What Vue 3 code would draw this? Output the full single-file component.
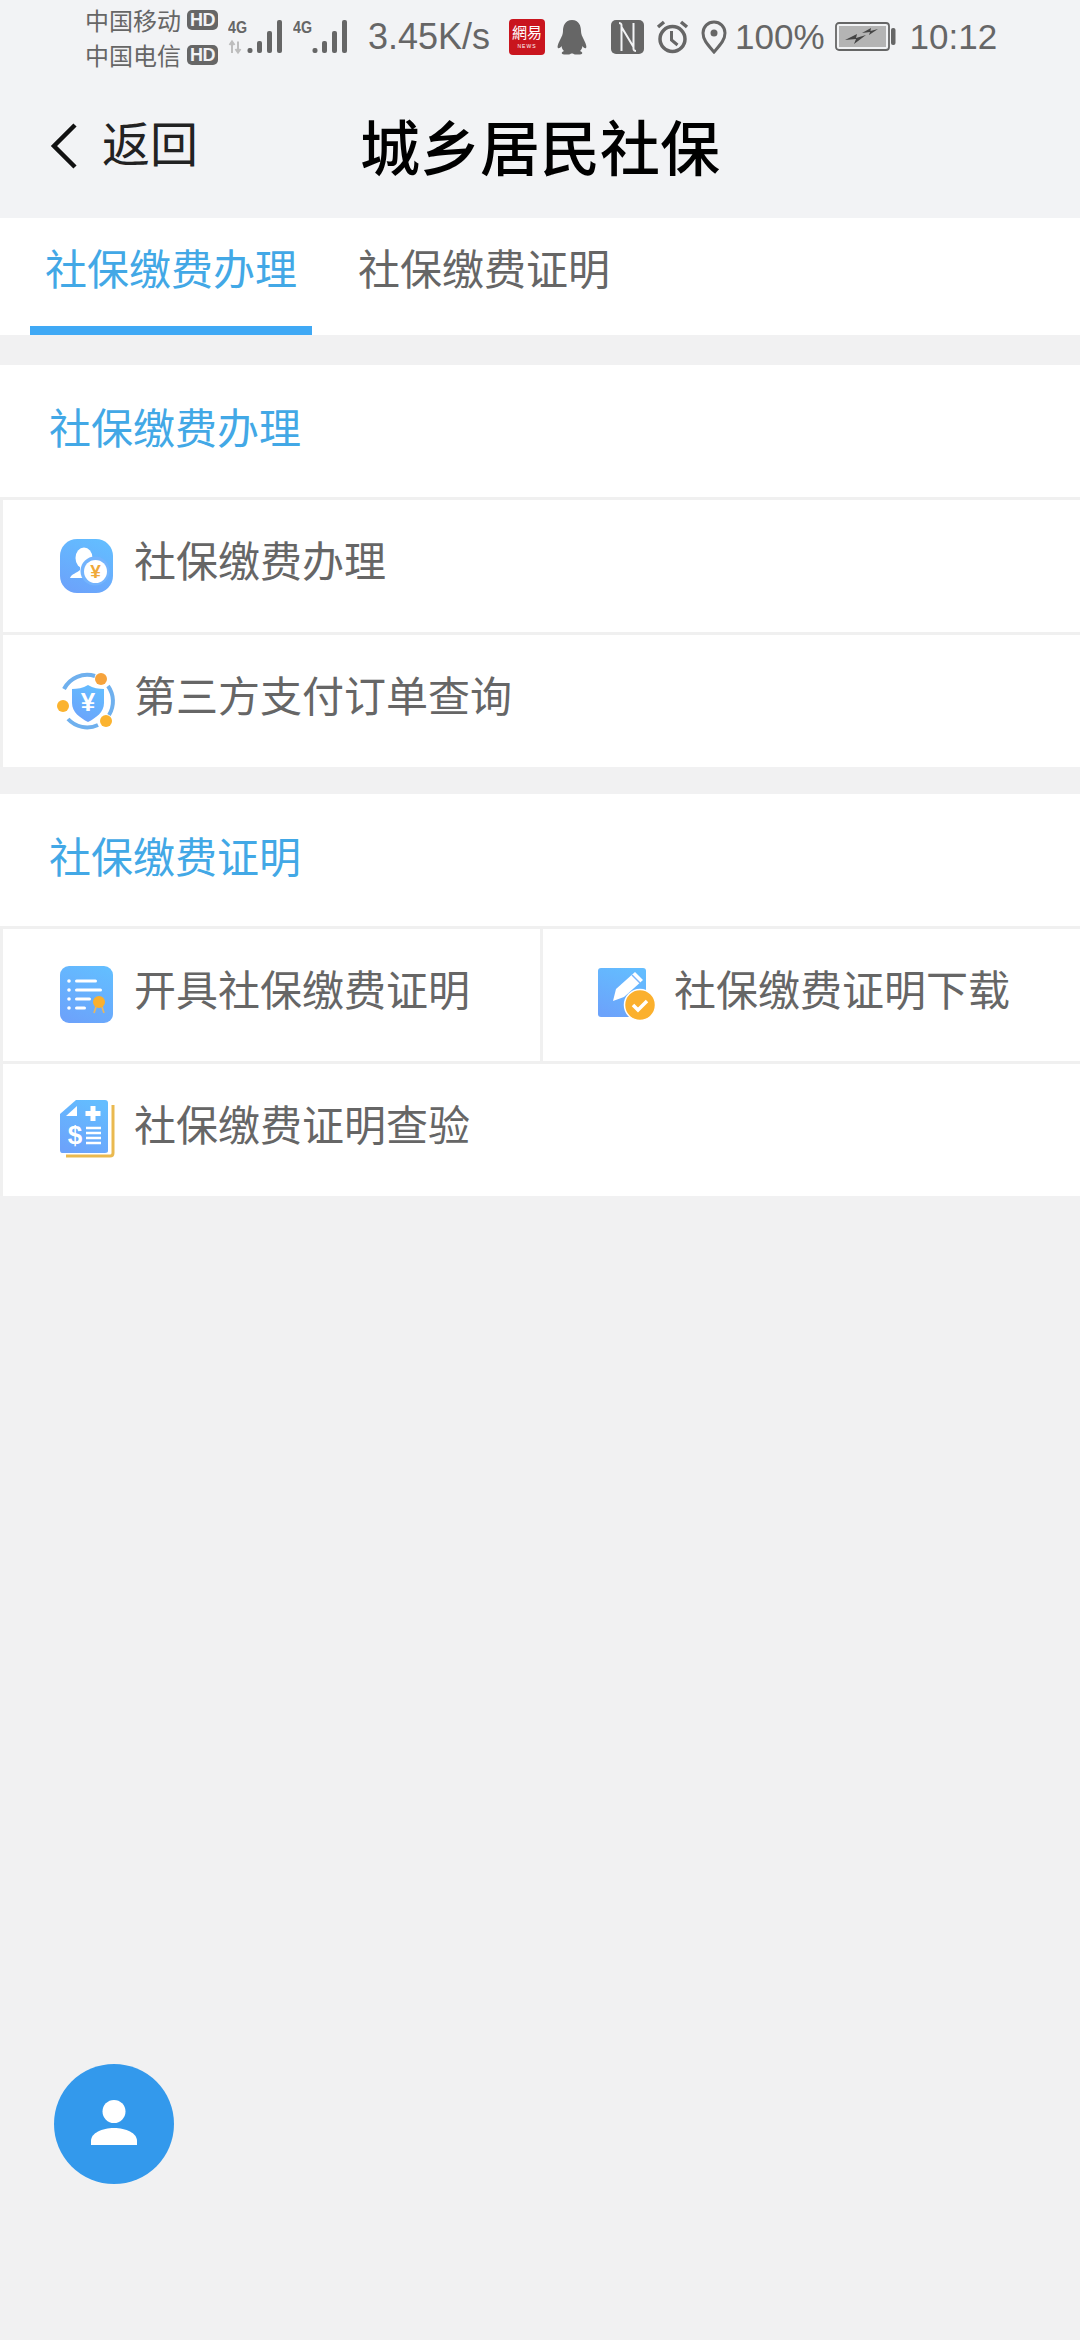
<script setup>
const sections = [
  {
    title: '社保缴费办理',
    rows: [
      [{ icon: 'person', label: '社保缴费办理' }],
      [{ icon: 'shield', label: '第三方支付订单查询' }],
    ],
  },
  {
    title: '社保缴费证明',
    rows: [
      [
        { icon: 'cert', label: '开具社保缴费证明' },
        { icon: 'pencil', label: '社保缴费证明下载' },
      ],
      [{ icon: 'doc', label: '社保缴费证明查验' }],
    ],
  },
]
</script>

<template>
  <div class="page">
    <div class="top">
      <div class="status">
        <div class="carriers">
          <div class="carrier">中国移动<span class="hd">HD</span></div>
          <div class="carrier">中国电信<span class="hd">HD</span></div>
        </div>
        <svg class="signal" width="55" height="36" viewBox="0 0 55 36">
          <text x="0" y="14" class="net" textLength="19" lengthAdjust="spacingAndGlyphs">4G</text>
          <path d="M4 34V23M1.500 26L4 22.500L6.500 26M10 22.500V33.500M7.500 30L10 33.500L12.500 30" stroke="#bdbdbd" stroke-width="2" fill="none" />
          <rect x="19.500" y="29" width="5" height="5" rx="2" fill="#666" />
          <rect x="29" y="22" width="5" height="12" rx="2" fill="#666" />
          <rect x="39" y="12" width="5" height="22" rx="2" fill="#666" />
          <rect x="49" y="1" width="5" height="33" rx="2" fill="#666" />
        </svg>
        <svg class="signal second" width="55" height="36" viewBox="0 0 55 36">
          <text x="0" y="14" class="net" textLength="19" lengthAdjust="spacingAndGlyphs">4G</text>
          <rect x="19.500" y="29" width="5" height="5" rx="2" fill="#666" />
          <rect x="29" y="22" width="5" height="12" rx="2" fill="#666" />
          <rect x="39" y="12" width="5" height="22" rx="2" fill="#666" />
          <rect x="49" y="1" width="5" height="33" rx="2" fill="#666" />
        </svg>
        <span class="speed">3.45K/s</span>
        <div class="news">
          <span class="news-cn">網易</span>
          <span class="news-en">NEWS</span>
        </div>
        <svg class="qq" width="30" height="36" viewBox="0 0 30 36">
          <path d="M15 1C8 1 6 7 6 12C6 15 5 17 3 21C1 25 0 28 1 29C2 30 4 28 4.500 27C5 30 6 31 7 32C4 33 4 35 7 35.500H12C13.500 35 14 34.500 15 34.500C16 34.500 16.500 35 18 35.500H23C26 35 26 33 23 32C24 31 25 30 25.500 27C26 28 28 30 29 29C30 28 29 25 27 21C25 17 24 15 24 12C24 7 22 1 15 1Z" fill="#666" />
        </svg>
        <svg class="nfc" width="33" height="34" viewBox="0 0 33 34">
          <rect x="0" y="0" width="33" height="34" rx="5" fill="#666" />
          <path d="M8 3C11 3 10.500 5 10.500 8V31M25 31C22 31 22.500 29 22.500 26V3M10.500 7L22.500 27" stroke="#f2f3f5" stroke-width="2" fill="none" />
        </svg>
        <svg class="alarm" width="33" height="34" viewBox="0 0 33 34">
          <circle cx="16.500" cy="19" r="12.500" stroke="#666" stroke-width="3.500" fill="none" />
          <path d="M15.500 11V20L21.500 25" stroke="#666" stroke-width="3" fill="none" />
          <path d="M2 7L8 2M31 7L25 2" stroke="#666" stroke-width="3.500" fill="none" />
        </svg>
        <svg class="pin" width="26" height="34" viewBox="0 0 26 34">
          <path d="M13 32C7 25 2 20 2 13C2 6.500 7 2 13 2C19 2 24 6.500 24 13C24 20 19 25 13 32Z" stroke="#666" stroke-width="3" fill="none" />
          <circle cx="13" cy="13" r="3.500" fill="#666" />
        </svg>
        <span class="percent">100%</span>
        <svg class="battery" width="61" height="30" viewBox="0 0 61 30">
          <rect x="1" y="1" width="53" height="27" rx="3" fill="#f2f3f5" stroke="#666" stroke-width="1.800" />
          <rect x="4" y="4" width="47" height="21" fill="#b4b4b4" />
          <rect x="56" y="6" width="4.500" height="17" rx="2" fill="#666" />
          <path d="M10 18L22 12L21 16L31 13L19 22L21 17ZM27 11L36 6L35.500 9L43 7L34 13L35 10Z" fill="#444" />
        </svg>
        <span class="clock">10:12</span>
      </div>
      <div class="nav">
        <div class="back">
          <svg width="30" height="48" viewBox="0 0 30 48">
            <path d="M26 3L5 24L26 45" stroke="#111" stroke-width="4.500" fill="none" />
          </svg>
          <span>返回</span>
        </div>
        <div class="title">城乡居民社保</div>
        <div></div>
      </div>
    </div>

    <div class="tabs">
      <div class="tab active">社保缴费办理</div>
      <div class="tab">社保缴费证明</div>
    </div>

    <div v-for="section in sections" :key="section.title" class="section">
      <div class="section-title"><span>{{ section.title }}</span></div>
      <div class="grid">
        <div v-for="(row, i) in section.rows" :key="i" class="row">
          <div v-for="item in row" :key="item.label" class="cell">
            <svg class="icon" width="60" height="60" viewBox="0 0 60 60">
              <defs>
                <linearGradient :id="'g-' + item.icon" x1="0.700" y1="0" x2="0.300" y2="1">
                  <stop offset="0" stop-color="#63bdff" />
                  <stop offset="1" stop-color="#6ca3fb" />
                </linearGradient>
              </defs>
              <template v-if="item.icon === 'person'">
                <rect x="3" y="3" width="53" height="54" rx="17" :fill="'url(#g-person)'" />
                <ellipse cx="27" cy="22" rx="8.500" ry="10.500" fill="#fff" />
                <path d="M13 42C14 38 20 37 23 34V28H32V42Z" fill="#fff" />
                <circle cx="38" cy="35" r="14.500" fill="#74b4fd" />
                <circle cx="38.500" cy="35.500" r="11.500" fill="#fff" />
                <text x="38.500" y="42" class="yen orange">¥</text>
              </template>
              <template v-else-if="item.icon === 'shield'">
                <path d="M7 18A26 26 0 0 1 38 5M51 15A26 26 0 0 1 52 44M41 54A26 26 0 0 1 11 48" stroke="#6fb0ee" stroke-width="4" fill="none" />
                <path d="M31 14C36 17 42 18 47 18V32C47 41 39 47 31 51C23 47 15 41 15 32V18C20 18 26 17 31 14Z" :fill="'url(#g-shield)'" />
                <text x="31" y="40" class="yen white">¥</text>
                <circle cx="44" cy="8" r="6" fill="#f6a33c" />
                <circle cx="6" cy="35" r="6" fill="#fbb32f" />
                <circle cx="49" cy="50" r="6" fill="#fbb32f" />
              </template>
              <template v-else-if="item.icon === 'cert'">
                <rect x="3" y="1" width="53" height="57" rx="9" :fill="'url(#g-cert)'" />
                <g fill="#fff">
                  <circle cx="12" cy="16" r="1.800" />
                  <rect x="18" y="14.500" width="22" height="3" rx="1.500" />
                  <circle cx="12" cy="25" r="1.800" />
                  <rect x="18" y="23.500" width="27" height="3" rx="1.500" />
                  <circle cx="12" cy="34" r="1.800" />
                  <rect x="18" y="32.500" width="16" height="3" rx="1.500" />
                  <circle cx="12" cy="43" r="1.800" />
                  <rect x="18" y="41.500" width="11" height="3" rx="1.500" />
                </g>
                <path d="M39 42L37 48M45 42L47 48" stroke="#e3b765" stroke-width="1.800" />
                <circle cx="42" cy="37" r="6" fill="#fbb02d" />
              </template>
              <template v-else-if="item.icon === 'pencil'">
                <rect x="1" y="3" width="48" height="49" rx="3" :fill="'url(#g-pencil)'" />
                <path d="M16 36L19 24L38 7L46 15L27 32Z" fill="#fff" />
                <path d="M35 10L43 18" stroke="#7ab4fb" stroke-width="1.500" />
                <circle cx="43" cy="40" r="15.500" fill="#fbb02d" stroke="#fff" stroke-width="1.500" />
                <path d="M36 40L41 45L50 36" stroke="#fff" stroke-width="3.500" fill="none" />
              </template>
              <template v-else>
                <path d="M9 56H53C55 56 56 55 56 53V5" stroke="#eab94f" stroke-width="3" fill="none" />
                <path d="M19 0H48C50 0 51 1 51 3V51C51 52 50 53 48 53H5C4 53 3 52 3 50V14Z" :fill="'url(#g-doc)'" />
                <path d="M9 16L20 6V16Z" fill="#fff" />
                <path d="M33.500 6H38.500V11H43.500V16H38.500V21H33.500V16H28.500V11H33.500Z" fill="#fff" />
                <text x="18" y="44" class="dollar">$</text>
                <path d="M29 28H44M29 33H44M29 38H44M29 43H44" stroke="#fff" stroke-width="2.500" />
              </template>
            </svg>
            <span class="label">{{ item.label }}</span>
          </div>
        </div>
      </div>
    </div>

    <div class="fab">
      <svg width="60" height="60" viewBox="0 0 60 60">
        <circle cx="30" cy="17.500" r="11.500" fill="#fff" />
        <path d="M7 51V47C7 39 18 34 30 34C42 34 53 39 53 47V51Z" fill="#fff" />
      </svg>
    </div>
  </div>
</template>

<style scoped>
.page {
  position: relative;
  height: 2340px;
  overflow: hidden;
  background: #f1f1f2;
  font-family: "Noto Sans CJK SC", "Liberation Sans", sans-serif;
}

.top {
  height: 218px;
  background: #f2f3f5;
}

.status {
  display: flex;
  align-items: center;
  height: 74px;
  padding-left: 85px;
  color: #666;
}

.carriers {
  width: 143px;
}

.carrier {
  display: flex;
  align-items: center;
  height: 35px;
  font-size: 24px;
  line-height: 35px;
}

.hd {
  margin-left: 6px;
  width: 31px;
  height: 20px;
  border-radius: 5px;
  background: #666;
  color: #f2f3f5;
  font: bold 18px/20px "Liberation Sans", sans-serif;
  letter-spacing: -0.500px;
  text-align: center;
}

.signal {
  flex: none;
}

.second {
  margin-left: 10px;
}

.net {
  font: bold 17px "Liberation Sans", sans-serif;
  fill: #666;
}

.speed,
.percent,
.clock {
  font: 35px/40px "Liberation Sans", sans-serif;
  white-space: nowrap;
}

.speed {
  margin-left: 20px;
  width: 121px;
  font-size: 36px;
}

.news {
  display: flex;
  flex-direction: column;
  align-items: center;
  width: 36px;
  height: 36px;
  margin-left: 20px;
  border-radius: 4px;
  background: #c9151e;
  color: #fff;
}

.news-cn {
  margin-top: 4px;
  font-size: 15px;
  line-height: 17px;
  white-space: nowrap;
}

.news-en {
  margin-top: 3px;
  font: 5px/6px "Liberation Sans", sans-serif;
  letter-spacing: 1px;
}

.qq {
  margin-left: 12px;
}

.nfc {
  margin-left: 24px;
}

.alarm {
  margin-left: 12px;
}

.pin {
  margin-left: 12px;
}

.percent {
  margin-left: 8px;
}

.battery {
  margin-left: 10px;
}

.clock {
  margin-left: 14px;
}

.nav {
  display: grid;
  grid-template-columns: 1fr auto 1fr;
  align-items: center;
  height: 144px;
}

.back {
  display: flex;
  align-items: center;
  gap: 23px;
  padding-left: 49px;
  font-size: 48px;
  color: #222;
}

.back span {
  padding-bottom: 10px;
}

.title {
  padding-bottom: 4px;
  font-size: 60px;
  font-weight: 500;
  color: #000;
}

.tabs {
  display: flex;
  height: 117px;
  padding-left: 30px;
  background: #fff;
}

.tab {
  width: 282px;
  padding-top: 18px;
  padding-left: 15px;
  font-size: 42px;
  line-height: 62px;
  color: #666;
  box-sizing: border-box;
}

.tab.active {
  margin-right: 31px;
  border-bottom: 9px solid #3fa9f5;
  color: #42a8e6;
}

.section {
  margin-top: 30px;
}

.section + .section {
  margin-top: 27px;
}

.section-title {
  display: flex;
  align-items: center;
  height: 132px;
  padding-left: 49px;
  background: #fff;
  font-size: 42px;
  color: #42a8e6;
}

.section-title span {
  padding-bottom: 12px;
}

.grid {
  display: flex;
  flex-direction: column;
  gap: 3px;
  padding: 3px 0 0 3px;
  background: #f0f0f0;
}

.row {
  display: flex;
  gap: 3px;
  height: 132px;
}

.cell {
  flex: 1;
  display: flex;
  align-items: center;
  gap: 17px;
  padding-left: 54px;
  background: #fff;
}

.icon {
  flex: none;
}

.label {
  padding-bottom: 15px;
  font-size: 42px;
  color: #666;
}

.yen {
  font: bold 19px "Liberation Sans", sans-serif;
  text-anchor: middle;
}

.white {
  font-size: 26px;
  fill: #fff;
}

.orange {
  fill: #efa93a;
}

.dollar {
  font: bold 26px "Liberation Sans", sans-serif;
  text-anchor: middle;
  fill: #fff;
}

.fab {
  position: absolute;
  left: 54px;
  top: 2064px;
  display: flex;
  align-items: center;
  justify-content: center;
  width: 120px;
  height: 120px;
  border-radius: 50%;
  background: #3399ec;
}
</style>

<style>
html,
body {
  margin: 0;
  background: #f1f1f2;
}
</style>
